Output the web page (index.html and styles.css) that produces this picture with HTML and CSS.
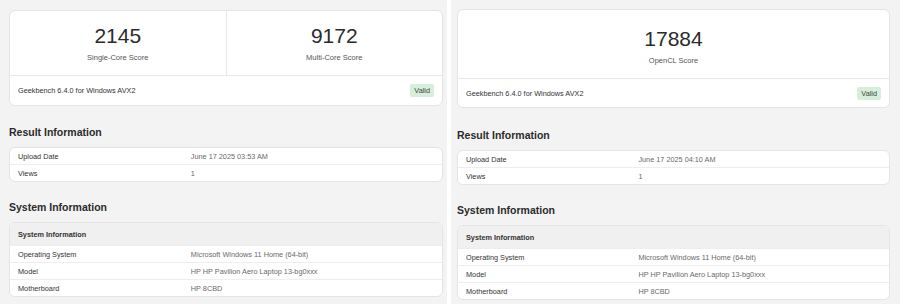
FILE: index.html
```html
<!DOCTYPE html>
<html lang="en">
<head>
    <meta charset="UTF-8">
    <meta name="viewport" content="width=device-width, initial-scale=1.0">
    <title>Geekbench Results</title>
    <link rel="stylesheet" href="styles.css">
</head>
<body>
    <div class="page">
        <!-- CPU result -->
        <div class="panel panel-left">
            <div class="card score-card">
                <div class="scores">
                    <div class="score">
                        <div class="score-value">2145</div>
                        <div class="score-name">Single-Core Score</div>
                    </div>
                    <div class="score">
                        <div class="score-value">9172</div>
                        <div class="score-name">Multi-Core Score</div>
                    </div>
                </div>
                <div class="score-footer">
                    <span>Geekbench 6.4.0 for Windows AVX2</span>
                    <span class="badge">Valid</span>
                </div>
            </div>

            <h2 class="section-title">Result Information</h2>
            <div class="card info">
                <div class="row"><div class="label">Upload Date</div><div class="value">June 17 2025 03:53 AM</div></div>
                <div class="row"><div class="label">Views</div><div class="value">1</div></div>
            </div>

            <h2 class="section-title">System Information</h2>
            <div class="card info">
                <div class="row head"><div class="label">System Information</div></div>
                <div class="row"><div class="label">Operating System</div><div class="value">Microsoft Windows 11 Home (64-bit)</div></div>
                <div class="row"><div class="label">Model</div><div class="value">HP HP Pavilion Aero Laptop 13-bg0xxx</div></div>
                <div class="row"><div class="label">Motherboard</div><div class="value">HP 8CBD</div></div>
            </div>
        </div>

        <!-- OpenCL result -->
        <div class="panel panel-right">
            <div class="card score-card">
                <div class="scores single">
                    <div class="score">
                        <div class="score-value">17884</div>
                        <div class="score-name">OpenCL Score</div>
                    </div>
                </div>
                <div class="score-footer">
                    <span>Geekbench 6.4.0 for Windows AVX2</span>
                    <span class="badge">Valid</span>
                </div>
            </div>

            <h2 class="section-title">Result Information</h2>
            <div class="card info">
                <div class="row"><div class="label">Upload Date</div><div class="value">June 17 2025 04:10 AM</div></div>
                <div class="row"><div class="label">Views</div><div class="value">1</div></div>
            </div>

            <h2 class="section-title">System Information</h2>
            <div class="card info">
                <div class="row head"><div class="label">System Information</div></div>
                <div class="row"><div class="label">Operating System</div><div class="value">Microsoft Windows 11 Home (64-bit)</div></div>
                <div class="row"><div class="label">Model</div><div class="value">HP HP Pavilion Aero Laptop 13-bg0xxx</div></div>
                <div class="row"><div class="label">Motherboard</div><div class="value">HP 8CBD</div></div>
            </div>
        </div>
    </div>
</body>
</html>
```

FILE: styles.css
```css
/* page */
body {
    margin: 0;
    padding: 0;
    background-color: #fff;
    font-family: 'Liberation Sans', Arial, sans-serif;
    color: #333;
}

.page {
    display: flex;
    gap: 4px;
    height: 304px;
    overflow: hidden;
}

.panel {
    background-color: #f3f3f3;
    padding-top: 10px;
}

.panel-left {
    width: 447px;
    padding-left: 9px;
    padding-right: 4px;
    box-sizing: border-box;
}

.panel-right {
    flex: 1;
    padding-left: 6px;
    padding-right: 10px;
    padding-top: 9px;
}

/* cards */
.card {
    background-color: #fff;
    border: 1px solid #e4e4e4;
    border-radius: 6px;
    overflow: hidden;
}

/* score card */
.scores {
    display: flex;
    height: 64px;
    border-bottom: 1px solid #e8e8e8;
}

.scores.single {
    height: 68px;
}

.score {
    flex: 1;
    text-align: center;
    padding-top: 13px;
}

.scores.single .score {
    padding-top: 17px;
}

.score + .score {
    border-left: 1px solid #e8e8e8;
}

.score-value {
    font-size: 21px;
    line-height: 24px;
    color: #2b2b2b;
}

.score-name {
    margin-top: 5px;
    font-size: 7.5px;
    line-height: 10px;
    color: #555;
}

.score-footer {
    display: flex;
    justify-content: space-between;
    align-items: center;
    height: 29px;
    padding: 0 8px;
    font-size: 7.3px;
    color: #333;
}

.panel-right .score-footer {
    height: 28px;
}

.badge {
    background-color: #d6eedb;
    color: #3d4a40;
    border-radius: 2px;
    padding: 3px 4px;
    line-height: 7px;
}

/* section titles */
.section-title {
    margin: 19px 0 8px;
    font-size: 10.5px;
    line-height: 13px;
    font-weight: bold;
    color: #2b2b2b;
}

.score-card + .section-title {
    margin-top: 20px;
}

.panel-right .score-card + .section-title {
    margin-top: 21px;
}

/* info tables */
.info .row {
    display: grid;
    grid-template-columns: 40% 1fr;
    height: 16px;
    align-items: center;
    font-size: 7.3px;
    border-top: 1px solid #eee;
}

.info .row:first-child {
    border-top: none;
}

.info .row.head {
    height: 22px;
    background-color: #f0f0f0;
    font-weight: bold;
}

.label {
    padding-left: 8px;
    color: #333;
}

.value {
    padding-left: 8px;
    color: #6a6a6a;
}
```
